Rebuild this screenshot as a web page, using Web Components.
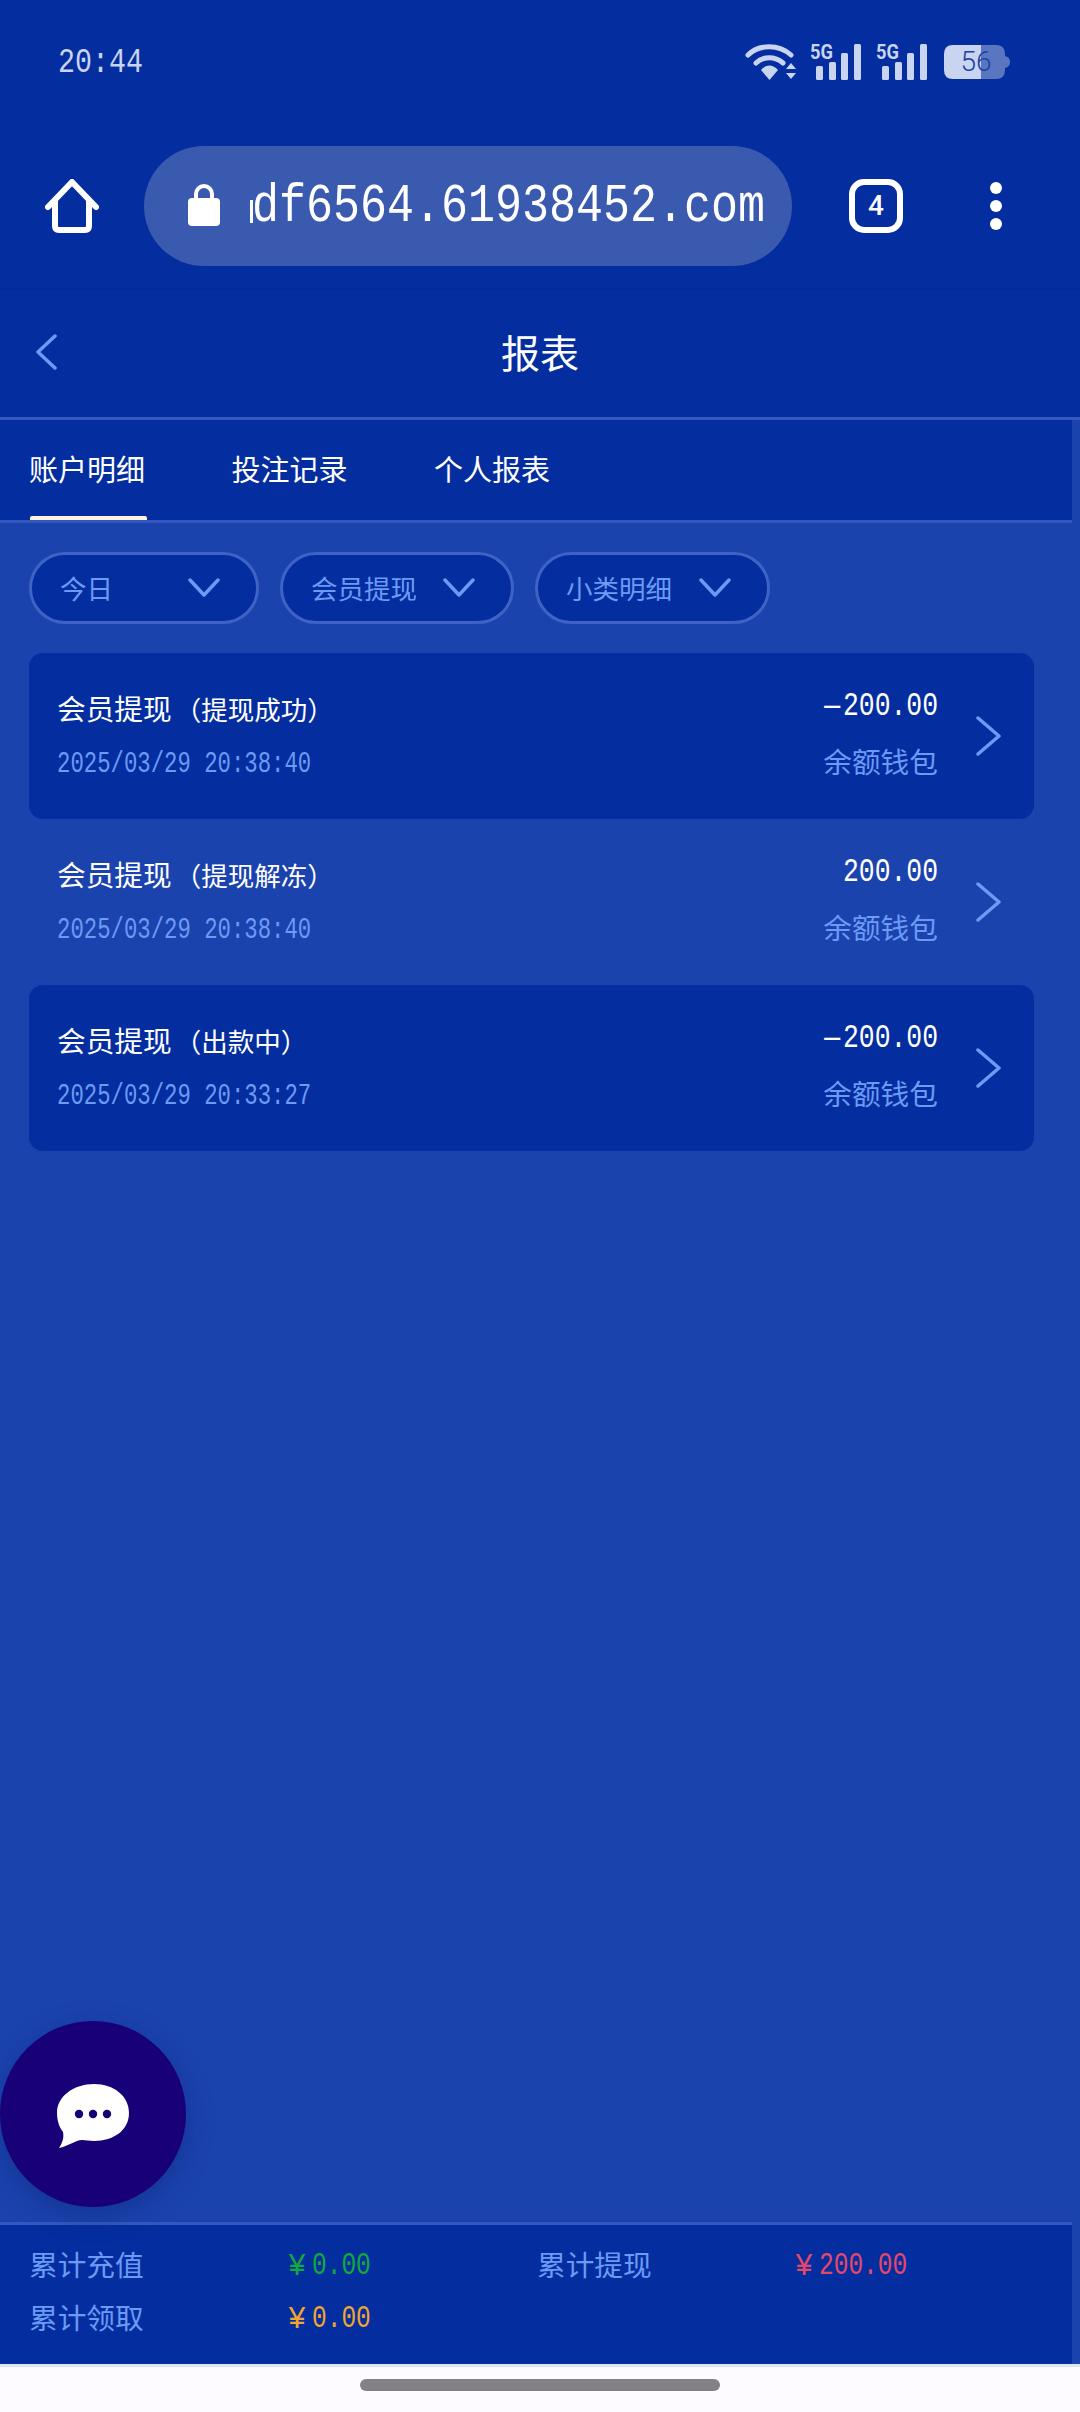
<!DOCTYPE html>
<html lang="zh">
<head>
<meta charset="utf-8">
<title>报表</title>
<style>
    html,body{margin:0;padding:0;}
    body{width:1080px;height:2412px;overflow:hidden;font-family:"Noto Sans CJK SC","Noto Sans",sans-serif;}
    .sub{font-size:26.5px;margin-left:3px;}
    .minus{margin-right:3px;}
</style>
</head>
<body>
<report-app>
    <status-bar slot="top"></status-bar>
    <browser-bar slot="top"><mono-txt style="--s:45px;--k:1.2">df6564.61938452.com</mono-txt></browser-bar>
    <nav-bar slot="top">报表</nav-bar>
    <tab-bar slot="top">
        <tab-item active>账户明细</tab-item>
        <tab-item>投注记录</tab-item>
        <tab-item>个人报表</tab-item>
    </tab-bar>

    <filter-row>
        <filter-pill style="--w:230px">今日</filter-pill>
        <filter-pill style="--w:234px">会员提现</filter-pill>
        <filter-pill style="--w:235px">小类明细</filter-pill>
    </filter-row>

    <record-card dark>
        <span slot="title">会员提现<span class="sub">（提现成功）</span></span>
        <mono-txt slot="date" style="--s:22.3px;--k:1.3">2025/03/29 20:38:40</mono-txt>
        <mono-txt slot="amount" style="--s:26.4px;--k:1.23"><span class="minus">—</span>200.00</mono-txt>
        <span slot="wallet">余额钱包</span>
    </record-card>
    <record-card>
        <span slot="title">会员提现<span class="sub">（提现解冻）</span></span>
        <mono-txt slot="date" style="--s:22.3px;--k:1.3">2025/03/29 20:38:40</mono-txt>
        <mono-txt slot="amount" style="--s:26.4px;--k:1.23">200.00</mono-txt>
        <span slot="wallet">余额钱包</span>
    </record-card>
    <record-card dark>
        <span slot="title">会员提现<span class="sub">（出款中）</span></span>
        <mono-txt slot="date" style="--s:22.3px;--k:1.3">2025/03/29 20:33:27</mono-txt>
        <mono-txt slot="amount" style="--s:26.4px;--k:1.23"><span class="minus">—</span>200.00</mono-txt>
        <span slot="wallet">余额钱包</span>
    </record-card>

    <chat-fab slot="overlay"></chat-fab>

    <total-bar slot="bottom">
        <total-label>累计充值</total-label>
        <total-value style="color:#12a83c">0.00</total-value>
        <total-label>累计提现</total-label>
        <total-value style="color:#e5476a">200.00</total-value>
        <total-label>累计领取</total-label>
        <total-value style="color:#f0a431">0.00</total-value>
    </total-bar>
    <gesture-bar slot="bottom"></gesture-bar>
</report-app>

<script>
// base class: every element just gives its markup and style
class BaseEl extends HTMLElement{
    constructor(){
        super();
        this.attachShadow({mode: 'open'});
    }
    getTemplate(){
        const template = document.createElement("template");
        template.innerHTML = `<style>${this.getStyle()}</style>${this.getMarkup()}`;
        return template;
    }
    getStyle(){ return ':host{display:block;}'; }
    getMarkup(){ return '<slot></slot>'; }
    connectedCallback(){
        this.shadowRoot.appendChild(this.getTemplate().content.cloneNode(true));
    }
}

class ReportApp extends BaseEl{
    getStyle(){
        return `
            :host{position:relative;display:flex;flex-direction:column;width:1080px;height:2412px;background:#1b43ae;}
            main{flex:1;}
        `;
    }
    getMarkup(){
        return `<slot name="top"></slot><main><slot></slot></main><slot name="overlay"></slot><slot name="bottom"></slot>`;
    }
}

// narrow tall digits of the phone font: width comes from the size, height from scaleY
class MonoTxt extends BaseEl{
    getStyle(){
        return `
            :host{display:inline-block;font-family:"Liberation Mono",monospace;font-size:var(--s);line-height:1;white-space:pre;transform:scaleY(var(--k));}
        `;
    }
}

class StatusBar extends BaseEl{
    getStyle(){
        return `
            :host{display:flex;align-items:center;justify-content:space-between;height:124px;background:#042e9f;padding:0 70px 0 58px;box-sizing:border-box;color:#c9d4f1;}
            .icons{display:flex;align-items:center;}
            svg{display:block;}
            svg text{font-family:"Roboto",sans-serif;font-weight:700;font-size:21px;fill:#c9d4f1;}
            .batt{position:relative;margin-left:2px;width:66px;height:34px;display:flex;align-items:center;justify-content:center;
                color:#1c3ea6;font-family:"Roboto",sans-serif;font-weight:300;font-size:28px;line-height:34px;}
            .batt svg{position:absolute;left:0;top:0;}
            .batt span{position:relative;left:-1px;}
        `;
    }
    signal(){
        return `<svg width="66" height="52" viewBox="0 -8 66 52">
            <text x="0" y="15" textLength="23" lengthAdjust="spacingAndGlyphs">5G</text>
            <g fill="#c9d4f1">
                <rect x="6" y="22" width="7" height="14" rx="1.5"/>
                <rect x="19" y="18" width="7" height="18" rx="1.5"/>
                <rect x="31" y="9" width="7" height="27" rx="1.5"/>
                <rect x="44" y="0" width="7" height="36" rx="1.5"/>
            </g>
        </svg>`;
    }
    getMarkup(){
        return `
            <mono-txt style="--s:28.3px;--k:1.23">20:44</mono-txt>
            <div class="icons">
                <svg width="52" height="36" viewBox="0 0 52 36" style="margin-right:13px">
                    <g fill="none" stroke="#c9d4f1" stroke-width="5" stroke-linecap="round">
                        <path d="M3 11 C14 0 34 0 46 11"/>
                        <path d="M11 19 C18 12 30 12 38 19"/>
                    </g>
                    <path d="M16 26 C21 20 28 20 33 26 L24.5 36 Z" fill="#c9d4f1"/>
                    <path d="M46 19 L51 25 H41 Z M41 29 H51 L46 35 Z" fill="#c9d4f1"/>
                </svg>
                ${this.signal()}
                ${this.signal()}
                <div class="batt">
                    <svg width="66" height="34" viewBox="0 0 66 34">
                        <path d="M30 0 H52 Q61 0 61 9 V25 Q61 34 52 34 H30 Z" fill="#5a76c0"/>
                        <path d="M61 11 Q66 12 66 17 Q66 22 61 23 Z" fill="#5a76c0"/>
                        <path d="M37 0 H9 Q0 0 0 9 V25 Q0 34 9 34 H37 Z" fill="#c9d4f1"/>
                    </svg>
                    <span>56</span>
                </div>
            </div>
        `;
    }
}

class BrowserBar extends BaseEl{
    getStyle(){
        return `
            :host{display:flex;align-items:center;height:166px;padding:0 0 0 45px;box-sizing:border-box;background:#042e9f;border-bottom:2px solid #04299180;color:#fff;}
            svg{display:block;flex:none;}
            .pill{position:relative;display:flex;align-items:center;width:648px;height:120px;margin:0 57px 0 45px;padding:2px 0 0 108px;box-sizing:border-box;
                background:#3a5ab0;border-radius:60px;}
            .pill .lock{position:absolute;left:44px;top:38px;}
            /* clipped stem of the letter before the visible part of the address */
            .pill::before{content:"";position:absolute;left:106px;top:54px;width:3px;height:23px;background:#fff;}
            .tabs{position:relative;width:54px;height:54px;border:6px solid #fff;border-radius:15px;box-sizing:border-box;display:flex;align-items:center;justify-content:center;
                font-family:"Roboto",sans-serif;font-weight:500;font-size:28px;line-height:1;}
        `;
    }
    getMarkup(){
        return `
            <svg width="54" height="54" viewBox="0 0 54 54">
                <path d="M3 28 L27 3 L51 28 M10 22 V47 Q10 51 14 51 H40 Q44 51 44 47 V22" fill="none" stroke="#fff" stroke-width="6" stroke-linecap="round" stroke-linejoin="round"/>
            </svg>
            <div class="pill">
                <svg class="lock" width="32" height="42" viewBox="0 0 32 42">
                    <path d="M8 16 V10 A8 8 0 0 1 24 10 V16" fill="none" stroke="#fff" stroke-width="4"/>
                    <rect x="0" y="14" width="32" height="28" rx="4" fill="#fff"/>
                </svg>
                <slot></slot>
            </div>
            <div class="tabs">4</div>
            <svg width="12" height="48" viewBox="0 0 12 48" style="margin-left:87px">
                <circle cx="6" cy="6" r="6" fill="#fff"/><circle cx="6" cy="24" r="6" fill="#fff"/><circle cx="6" cy="42" r="6" fill="#fff"/>
            </svg>
        `;
    }
}

class NavBar extends BaseEl{
    getStyle(){
        return `
            :host{display:grid;grid-template-columns:1fr auto 1fr;align-items:center;height:130px;box-sizing:border-box;background:#042e9f;border-bottom:3px solid #3558c0;color:#fff;font-size:39px;line-height:1;padding-bottom:5px;}
            svg{display:block;margin-left:34px;margin-top:2px;}
        `;
    }
    getMarkup(){
        return `
            <svg width="24" height="36" viewBox="0 0 24 36"><path d="M21 2 L4 18 L21 34" fill="none" stroke="#6c9af5" stroke-width="3.5" stroke-linecap="round" stroke-linejoin="round"/></svg>
            <div><slot></slot></div>
        `;
    }
}

class TabBar extends BaseEl{
    getStyle(){
        return `
            :host{display:flex;gap:86.5px;width:1072px;height:103px;box-sizing:border-box;padding-left:29px;background:#042e9f;border-bottom:3px solid #3558c0;}
        `;
    }
}

class TabItem extends BaseEl{
    getStyle(){
        return `
            :host{position:relative;display:flex;align-items:center;width:116px;height:100px;box-sizing:border-box;padding-bottom:3px;color:#fff;font-size:29px;line-height:1;white-space:nowrap;}
            :host([active])::after{content:"";position:absolute;left:1px;bottom:0;width:117px;height:4px;background:#fdf3dc;border-radius:2px 2px 0 0;}
        `;
    }
}

class FilterRow extends BaseEl{
    getStyle(){
        return `:host{display:flex;gap:21px;padding:29px 0 29px 29px;}`;
    }
}

class FilterPill extends BaseEl{
    getStyle(){
        return `
            :host{display:flex;align-items:center;justify-content:space-between;width:var(--w);height:72px;box-sizing:border-box;padding:0 36px 0 28px;
                background:#042e9f;border:3px solid #3f63c4;border-radius:36px;color:#6c9af5;font-size:26.5px;line-height:1;white-space:nowrap;}
            svg{display:block;flex:none;}
        `;
    }
    getMarkup(){
        return `
            <span><slot></slot></span>
            <svg width="32" height="20" viewBox="0 0 32 20"><path d="M2 2 L16 17 L30 2" fill="none" stroke="#6c9af5" stroke-width="3.5" stroke-linecap="round" stroke-linejoin="round"/></svg>
        `;
    }
}

class RecordCard extends BaseEl{
    getStyle(){
        return `
            :host{display:flex;width:1005px;height:166px;margin-left:29px;box-sizing:border-box;padding:0 33px 0 28px;border-radius:14px;}
            :host([dark]){background:#042e9f;}
            .left,.right{display:flex;flex-direction:column;}
            .left{flex:1;padding-top:37px;gap:20px;}
            .right{align-items:flex-end;padding-top:35px;gap:19px;}
            .row{height:36px;line-height:36px;font-size:28.7px;white-space:nowrap;display:flex;align-items:center;}
            .white{color:#fff;}
            .blue{color:#6c9af5;}
            svg{display:block;align-self:center;margin-left:38px;}
        `;
    }
    getMarkup(){
        return `
            <div class="left">
                <div class="row white"><slot name="title"></slot></div>
                <div class="row blue"><slot name="date"></slot></div>
            </div>
            <div class="right">
                <div class="row white"><slot name="amount"></slot></div>
                <div class="row blue"><slot name="wallet"></slot></div>
            </div>
            <svg width="25" height="40" viewBox="0 0 25 40"><path d="M2 2 L23 20 L2 38" fill="none" stroke="#6c9af5" stroke-width="3.5" stroke-linecap="round" stroke-linejoin="round"/></svg>
        `;
    }
}

class ChatFab extends BaseEl{
    getStyle(){
        return `
            :host{position:absolute;left:0;top:2021px;display:flex;align-items:center;justify-content:center;width:186px;height:186px;border-radius:50%;background:#180078;box-shadow:0 8px 28px rgba(4,20,90,.3);}
            svg{display:block;margin-top:3px;}
        `;
    }
    getMarkup(){
        return `
            <svg width="74" height="66" viewBox="0 0 74 66">
                <path d="M38 1 C58 1 73 13 73 30 C73 47 58 58 38 58 C31 58 26 56 21 58 C14 61 8 64 3 65 C7 59 8 54 7 49 C3 44 1 37 1 30 C1 13 18 1 38 1 Z" fill="#fff"/>
                <circle cx="23" cy="31" r="4.2" fill="#180078"/><circle cx="37" cy="31" r="4.2" fill="#180078"/><circle cx="51" cy="31" r="4.2" fill="#180078"/>
            </svg>
        `;
    }
}

class TotalBar extends BaseEl{
    getStyle(){
        return `
            :host{display:grid;grid-template-columns:259px 249px 258px 1fr;grid-auto-rows:53px;align-items:center;width:1072px;height:142px;box-sizing:border-box;padding:14px 0 0 29px;background:#042e9f;border-top:3px solid #3558c0;}
        `;
    }
}

class TotalLabel extends BaseEl{
    getStyle(){
        return `:host{display:block;color:#6c9af5;font-size:28.7px;line-height:1;white-space:nowrap;padding-bottom:2px;}`;
    }
}

class TotalValue extends BaseEl{
    getStyle(){
        return `
            :host{display:flex;align-items:center;white-space:nowrap;padding-top:2px;}
            .yen{margin-right:6px;}
        `;
    }
    getMarkup(){
        return `
            <mono-txt class="yen" style="--s:30px;--k:1.05">¥</mono-txt>
            <mono-txt style="--s:24.5px;--k:1.3"><slot></slot></mono-txt>
        `;
    }
}

class GestureBar extends BaseEl{
    getStyle(){
        return `
            :host{display:flex;justify-content:center;height:48px;box-sizing:border-box;padding-top:12px;background:#fdfbff;border-top:3px solid #dde4f5;}
            div{width:360px;height:12px;border-radius:6px;background:#838188;}
        `;
    }
    getMarkup(){ return '<div></div>'; }
}

customElements.define('report-app',ReportApp);
customElements.define('mono-txt',MonoTxt);
customElements.define('status-bar',StatusBar);
customElements.define('browser-bar',BrowserBar);
customElements.define('nav-bar',NavBar);
customElements.define('tab-bar',TabBar);
customElements.define('tab-item',TabItem);
customElements.define('filter-row',FilterRow);
customElements.define('filter-pill',FilterPill);
customElements.define('record-card',RecordCard);
customElements.define('chat-fab',ChatFab);
customElements.define('total-bar',TotalBar);
customElements.define('total-label',TotalLabel);
customElements.define('total-value',TotalValue);
customElements.define('gesture-bar',GestureBar);
</script>
</body>
</html>
